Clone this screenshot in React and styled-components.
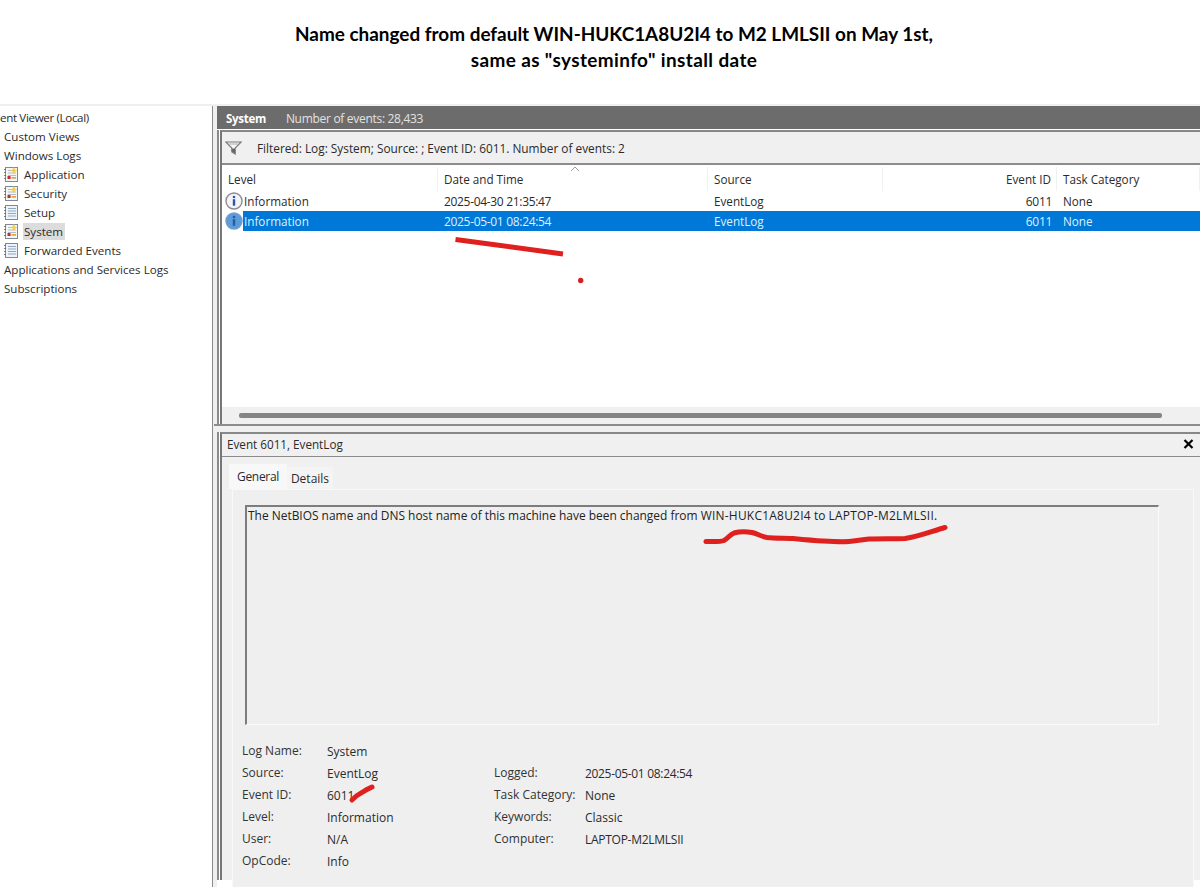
import React from "react";
import styled, { createGlobalStyle } from "styled-components";

const Global = createGlobalStyle`
  html, body { margin: 0; padding: 0; background: #fff; }
  body { font-family: "Open Sans", "Noto Sans", sans-serif; color: #2b2b2b; }
  #root { width: 1200px; height: 887px; overflow: hidden; }
`;

const Page = styled.div`
  position: relative;
  width: 1200px;
  height: 887px;
  overflow: hidden;
  display: flex;
  flex-direction: column;
  font-size: 12px;
`;

const TitleBlock = styled.header`
  height: 104px;
  box-sizing: border-box;
  padding: 21px 0 0 28px;
  text-align: center;
  font-family: Lato, "Liberation Sans", sans-serif;
  font-weight: 700;
  font-size: 18.93px;
  line-height: 26px;
  color: #000;
`;

const TitleLine = styled.div`
  letter-spacing: ${(p) => (p.$wide ? "0.4px" : "0")};
`;

const Workspace = styled.div`
  flex: 1;
  min-height: 0;
  display: flex;
  background: #f0f0f0;
  padding-top: 2px;
`;

const TreePane = styled.nav`
  width: 212px;
  flex: none;
  overflow: hidden;
  background: #fff;
  border-right: 1px solid #8a8a8a;
  padding-top: 2px;
  font-size: 11.6px;
`;

const TreeRow = styled.div`
  height: 19px;
  display: flex;
  align-items: center;
  gap: 4px;
  letter-spacing: ${(p) => (p.$root ? "-0.35px" : "0")};
  padding-left: ${(p) => (p.$nested ? "3px" : p.$root ? "0" : "4px")};
`;

const TreeLabel = styled.span`
  white-space: nowrap;
  line-height: 17px;
  padding: 0 2px 0 ${(p) => (p.$selected ? "1px" : "0")};
  margin-left: ${(p) => (p.$selected ? "-1px" : "0")};
  background: ${(p) => (p.$selected ? "#dcdcdc" : "transparent")};
`;

const RightPane = styled.main`
  flex: 1;
  min-width: 0;
  margin-left: 4px;
  display: flex;
  flex-direction: column;
  background: #fff;
`;

const PaneHeader = styled.div`
  height: 23px;
  box-sizing: border-box;
  padding: 2px 0 0 9px;
  flex: none;
  background: #6c6c6c;
  display: flex;
  align-items: center;
  gap: 20px;
  color: #e2e2e2;
  letter-spacing: -0.3px;
`;

const PaneName = styled.strong`
  color: #fff;
  font-weight: 700;
  font-size: 11.5px;
`;

const Frame = styled.div`
  flex: none;
  height: ${(p) => p.$h}px;
  margin-top: ${(p) => p.$mt || 0}px;
  border-left: 2px solid #8a8a8a;
  background: #fff;
  display: flex;
  flex-direction: column;
`;

const Inner = styled.div`
  flex: 1;
  min-height: 0;
  margin-left: 1px;
  border-left: 2px solid #777;
  border-top: 2px solid #888;
  display: flex;
  flex-direction: column;
  background: #fff;
`;

const FilterBar = styled.div`
  height: 33px;
  box-sizing: border-box;
  padding: 1px 0 0 3px;
  flex: none;
  background: #f0f0f0;
  border-bottom: 2px solid #8c8c8c;
  display: flex;
  align-items: center;
  gap: 15px;
  font-size: 11.85px;
`;

const GridRow = styled.div`
  display: grid;
  grid-template-columns: 216px 270px 175px 174px 1fr;
  height: ${(p) => p.$h}px;
  box-sizing: border-box;
  padding-top: ${(p) => (p.$head ? "2px" : "0")};
  align-items: center;
  flex: none;
  font-size: 11.7px;
`;

const HeadCell = styled.div`
  height: 24px;
  display: flex;
  align-items: center;
  justify-content: ${(p) => (p.$right ? "flex-end" : "flex-start")};
  padding: ${(p) => (p.$right ? "0 5px 0 0" : "0 0 0 6px")};
  border-right: 1px solid #f1f1f1;
  position: relative;
`;

const SortMark = styled.svg`
  position: absolute;
  left: 132px;
  top: -1px;
`;

const Cell = styled.div`
  display: flex;
  align-items: center;
  height: 100%;
  white-space: nowrap;
  font-size: ${(p) => (p.$digits ? "12px" : "inherit")};
  letter-spacing: ${(p) => (p.$digits ? "-0.32px" : "0")};
  justify-content: ${(p) => (p.$right ? "flex-end" : "flex-start")};
  padding: ${(p) => (p.$right ? "0 5px 0 0" : "0 0 0 6px")};
  background: ${(p) => (p.$sel ? "#0078d7" : "transparent")};
  color: ${(p) => (p.$sel ? "#dff0ff" : "#2b2b2b")};
`;

const LevelCell = styled.div`
  display: flex;
  align-items: center;
  height: 100%;
  padding-left: 3px;
`;

const LevelText = styled.span`
  flex: 1;
  height: 100%;
  display: flex;
  align-items: center;
  padding-left: 1px;
  background: ${(p) => (p.$sel ? "#0078d7" : "transparent")};
  color: ${(p) => (p.$sel ? "#dff0ff" : "#2b2b2b")};
`;

const ListBody = styled.div`
  flex: 1;
  min-height: 0;
`;

const ScrollTrack = styled.div`
  height: 17px;
  flex: none;
  background: #f0f0f0;
  display: flex;
  align-items: center;
  padding: 0 38px 0 17px;
`;

const ScrollThumb = styled.div`
  flex: 1;
  height: 5px;
  border-radius: 2px;
  background: #858585;
`;

const Divider = styled.div`
  height: 6px;
  flex: none;
  background: #f0f0f0;
  border-top: 2px solid #8c8c8c;
  margin-left: -5px;
`;

const DetailTitle = styled.div`
  height: 19px;
  box-sizing: content-box;
  flex: none;
  display: flex;
  align-items: center;
  justify-content: space-between;
  padding: 0 6px 3px 5px;
  margin-bottom: -1px;
  background: #f0f0f0;
  border-bottom: 2px solid #8c8c8c;
  font-size: 11.7px;
`;

const CloseMark = styled.svg`
  display: block;
`;

const DetailBody = styled.div`
  flex: 1;
  min-height: 0;
  background: #f0f0f0;
  padding: 7px 6px 0 7px;
`;

const Tabs = styled.div`
  display: flex;
  align-items: flex-end;
  height: 25px;
`;

const Tab = styled.div`
  height: ${(p) => (p.$active ? 25 : 22)}px;
  box-sizing: border-box;
  width: ${(p) => (p.$active ? 58 : 46)}px;
  display: flex;
  align-items: center;
  justify-content: center;
  background: ${(p) => (p.$active ? "#f8f8f8" : "#f4f4f4")};
  padding-bottom: ${(p) => (p.$active ? "1px" : "0")};
  letter-spacing: ${(p) => (p.$active ? "-0.3px" : "0")};
`;

const TabPanel = styled.section`
  margin-left: 3px;
  height: 420px;
  border-top: 1px solid #f8f8f8;
  border-right: 1px solid #f9f9f9;
  border-left: 1px solid #f9f9f9;
  background: #efefef;
  box-sizing: border-box;
  padding: 15px 34px 0 12px;
`;

const MessageBox = styled.div`
  height: 220px;
  box-sizing: border-box;
  border-top: 2px solid #7d7d7d;
  border-left: 2px solid #7d7d7d;
  border-right: 1px solid #fafafa;
  border-bottom: 1px solid #fafafa;
  padding: 0 1px;
  line-height: 17px;
  font-size: 11.95px;
  color: #222;
`;

const HostName = styled.span`
  letter-spacing: 0.25px;
`;

const Fields = styled.div`
  display: grid;
  grid-template-columns: 85px 167px 91px 1fr;
  grid-auto-rows: 22px;
  margin: 15px 0 0 -3px;
  align-items: center;
`;

const FieldLabel = styled.div`
  color: #333;
  margin-top: -2px;
  white-space: nowrap;
`;

const FieldValue = styled.div`
  color: #2b2b2b;
  white-space: nowrap;
  letter-spacing: ${(p) => p.$tight || "0"};
`;

const Ink = styled.svg`
  position: absolute;
  left: 0;
  top: 0;
  pointer-events: none;
`;

const LogIcon = ({ plain }) => (
  <svg width="17" height="17" viewBox="0 0 17 17">
    <rect x="2.500" y="1.500" width="12" height="14" fill={plain ? "#eef3fa" : "#f6f6f0"} stroke="#7f8a98" />
    <path d="M2 3v1M2 6v1M2 9v1M2 12v1" stroke="#666" strokeWidth="1.600" />
    <path d="M5 4.500h8M5 7h8M5 9.500h8M5 12h8" stroke={plain ? "#8fa7c4" : "#b4bcc8"} />
    {!plain && (
      <>
        <path d="M10.800 1l1.300 2.500 2.400 1-2.400 1-1.300 2.800-1.300-2.800-2.300-1 2.300-1z" fill="#f5cf45" />
        <rect x="4.500" y="10" width="3" height="3" fill="#c8283a" />
        <rect x="9" y="11" width="4" height="1.500" fill="#e3a43b" />
      </>
    )}
  </svg>
);

const InfoIcon = ({ sel }) => (
  <svg width="18" height="18" viewBox="0 0 18 18">
    <circle cx="9" cy="9" r="8" fill={sel ? "#5c9ad8" : "#f4f4f8"} stroke={sel ? "#6d9fd0" : "#8c8c92"} strokeWidth="1.400" />
    <circle cx="9" cy="5" r="1.300" fill={sel ? "#1d5fa8" : "#2658b0"} />
    <rect x="7.800" y="7.200" width="2.400" height="6.500" fill={sel ? "#1d5fa8" : "#2658b0"} />
  </svg>
);

const FunnelIcon = () => (
  <svg width="17" height="14" viewBox="0 0 17 14">
    <path d="M.8 1h15.400l-6 6v6l-3.400-2V7z" fill="#f7f7f7" stroke="#777" strokeWidth="1.100" />
    <path d="M6.800 7.500h3.400v5l-3.400-2z" fill="#666" />
    <path d="M3.500 3h10" stroke="#aaa" />
  </svg>
);

const tree = [
  { label: "ent Viewer (Local)", root: true },
  { label: "Custom Views" },
  { label: "Windows Logs" },
  { label: "Application", icon: "log" },
  { label: "Security", icon: "log" },
  { label: "Setup", icon: "plain" },
  { label: "System", icon: "log", selected: true },
  { label: "Forwarded Events", icon: "plain" },
  { label: "Applications and Services Logs" },
  { label: "Subscriptions" },
];

const events = [
  { date: "2025-04-30 21:35:47", sel: false, h: 20 },
  { date: "2025-05-01 08:24:54", sel: true, h: 20 },
];

const fields = [
  ["Log Name:", "System", "", ""],
  ["Source:", "EventLog", "Logged:", "2025-05-01 08:24:54", "-0.32px"],
  ["Event ID:", "6011", "Task Category:", "None"],
  ["Level:", "Information", "Keywords:", "Classic"],
  ["User:", "N/A", "Computer:", "LAPTOP-M2LMLSII", "-0.27px"],
  ["OpCode:", "Info", "", ""],
];

export default function App() {
  return (
    <Page>
      <Global />
      <TitleBlock>
        <TitleLine>Name changed from default WIN-HUKC1A8U2I4 to M2 LMLSII on May 1st,</TitleLine>
        <TitleLine $wide>same as "systeminfo" install date</TitleLine>
      </TitleBlock>
      <Workspace>
        <TreePane>
          {tree.map((t) => (
            <TreeRow key={t.label} $nested={!!t.icon} $root={t.root}>
              {t.icon && <LogIcon plain={t.icon === "plain"} />}
              <TreeLabel $selected={t.selected}>{t.label}</TreeLabel>
            </TreeRow>
          ))}
        </TreePane>
        <RightPane>
          <PaneHeader>
            <PaneName>System</PaneName>
            <span>Number of events: 28,433</span>
          </PaneHeader>
          <Frame $h={294} $mt={1}>
            <Inner>
              <FilterBar>
                <FunnelIcon />
                <span>Filtered: Log: System; Source: ; Event ID: 6011. Number of events: 2</span>
              </FilterBar>
              <ListBody>
                <GridRow $h={26} $head>
                  <HeadCell>Level</HeadCell>
                  <HeadCell>
                    Date and Time
                    <SortMark width="10" height="6" viewBox="0 0 10 6">
                      <path d="M1 5l4-4 4 4" fill="none" stroke="#a0a0a0" />
                    </SortMark>
                  </HeadCell>
                  <HeadCell>Source</HeadCell>
                  <HeadCell $right>Event ID</HeadCell>
                  <HeadCell>Task Category</HeadCell>
                </GridRow>
                {events.map((e) => (
                  <GridRow key={e.date} $h={e.h}>
                    <LevelCell>
                      <InfoIcon sel={e.sel} />
                      <LevelText $sel={e.sel}>Information</LevelText>
                    </LevelCell>
                    <Cell $sel={e.sel} $digits>{e.date}</Cell>
                    <Cell $sel={e.sel}>EventLog</Cell>
                    <Cell $sel={e.sel} $digits $right>6011</Cell>
                    <Cell $sel={e.sel}>None</Cell>
                  </GridRow>
                ))}
              </ListBody>
              <ScrollTrack>
                <ScrollThumb />
              </ScrollTrack>
            </Inner>
          </Frame>
          <Frame $h={456}>
            <Divider />
            <Inner>
              <DetailTitle>
                <span>Event 6011, EventLog</span>
                <CloseMark width="11" height="10" viewBox="0 0 11 10">
                  <path d="M1.500 1l8 8M9.500 1l-8 8" stroke="#000" strokeWidth="2.200" />
                </CloseMark>
              </DetailTitle>
              <DetailBody>
                <Tabs>
                  <Tab $active>General</Tab>
                  <Tab>Details</Tab>
                </Tabs>
                <TabPanel>
                  <MessageBox>
                    The NetBIOS name and DNS host name of this machine have been changed from{" "}
                    <HostName>WIN-HUKC1A8U2I4</HostName> to <HostName>LAPTOP-M2LMLSII.</HostName>
                  </MessageBox>
                  <Fields>
                    {fields.map((f) => (
                      <React.Fragment key={f[0]}>
                        <FieldLabel>{f[0]}</FieldLabel>
                        <FieldValue>{f[1]}</FieldValue>
                        <FieldLabel>{f[2]}</FieldLabel>
                        <FieldValue $tight={f[4]}>{f[3]}</FieldValue>
                      </React.Fragment>
                    ))}
                  </Fields>
                </TabPanel>
              </DetailBody>
            </Inner>
          </Frame>
        </RightPane>
      </Workspace>
      <Ink width="1200" height="887" viewBox="0 0 1200 887">
        <path d="M455.500 239.500L563 254" fill="none" stroke="#e0201f" strokeWidth="5" />
        <circle cx="580.700" cy="280.500" r="2.700" fill="#d8201f" />
        <path d="M706 541.500c8 0 14 .5 18-1 4-2 6-6 10-7.500 5-1.500 13-1.500 18-.5 5 1 9 4 15 5 8 1 18 .5 26 1 10 1 20 2 30 2.500 9 .5 18 1 26 .5 7-.5 13-2 20-2.500 12-.5 25 0 36-.5 14-2 26-7 40-11" fill="none" stroke="#e0201f" strokeWidth="5" strokeLinecap="round" strokeLinejoin="round" />
        <path d="M352 800c5-6 10-7 14-10 2-1 4-2 6-3" fill="none" stroke="#e0201f" strokeWidth="5" strokeLinecap="round" />
      </Ink>
    </Page>
  );
}
